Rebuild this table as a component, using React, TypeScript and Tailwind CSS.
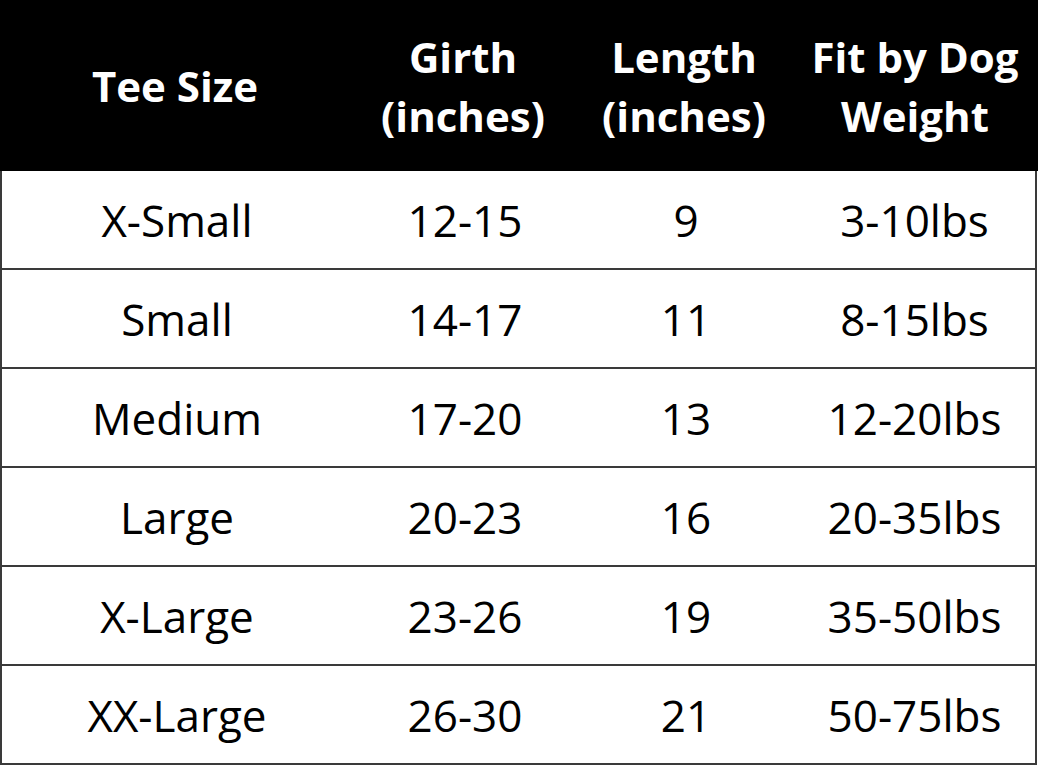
const header = [
  ["Tee Size"],
  ["Girth", "(inches)"],
  ["Length", "(inches)"],
  ["Fit by Dog", "Weight"],
];

const rows = [
  ["X-Small", "12-15", "9", "3-10lbs"],
  ["Small", "14-17", "11", "8-15lbs"],
  ["Medium", "17-20", "13", "12-20lbs"],
  ["Large", "20-23", "16", "20-35lbs"],
  ["X-Large", "23-26", "19", "35-50lbs"],
  ["XX-Large", "26-30", "21", "50-75lbs"],
];

const cols = "grid grid-cols-[350px_226px_216px_1fr]";

export default function App() {
  return (
    <div
      className="w-[1038px] h-[775px] bg-white text-black"
      style={{ fontFamily: '"Open Sans", "Noto Sans", sans-serif' }}
    >
      <div className={`${cols} h-[171px] bg-black text-white font-bold text-[42px] leading-[59px]`}>
        {header.map((lines, i) => (
          <div key={i} className="flex flex-col items-center justify-center">
            {lines.map((l) => (
              <span key={l} className="whitespace-nowrap">{l}</span>
            ))}
          </div>
        ))}
      </div>
      <div className="w-[1037px] border-x-2 border-[#3a3a3a]">
        {rows.map((r) => (
          <div key={r[0]} className={`${cols} h-[99px] border-b-2 border-[#3a3a3a] text-[44px]`}>
            {r.map((c, i) => (
              <div key={i} className="flex items-center justify-center">
                {c}
              </div>
            ))}
          </div>
        ))}
      </div>
    </div>
  );
}
